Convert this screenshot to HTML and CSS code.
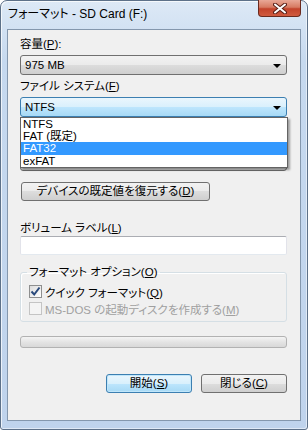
FILE: index.html
```html
<!DOCTYPE html>
<html lang="ja">

<head>
    <meta charset="UTF-8">
    <meta name="viewport" content="width=device-width, initial-scale=1.0">
    <title>フォーマット - SD Card (F:)</title>
    <link rel="stylesheet" href="styles.css">
</head>

<body>
    <div class="window">
        <div class="titlebar">
            <span class="title">フォーマット - SD Card (F:)</span>
            <div class="close-btn">
                <svg width="14" height="11" viewBox="0 0 14 11">
                    <path d="M2 1.5 L12 9.5 M12 1.5 L2 9.5" stroke="#5a2018" stroke-width="4" stroke-linecap="round" />
                    <path d="M2 1.5 L12 9.5 M12 1.5 L2 9.5" stroke="#ffffff" stroke-width="2" stroke-linecap="round" />
                </svg>
            </div>
        </div>

        <div class="client">
            <div class="label first">容量(<u>P</u>):</div>
            <div class="combo"><span>975 MB</span><i class="arrow"></i></div>

            <div class="label">ファイル システム(<u>F</u>)</div>
            <div class="combo-wrap">
                <div class="combo focus"><span>NTFS</span><i class="arrow"></i></div>
                <ul class="dropdown">
                    <li>NTFS</li>
                    <li>FAT (既定)</li>
                    <li class="selected">FAT32</li>
                    <li>exFAT</li>
                </ul>
            </div>

            <!-- allocation size row, hidden under the open list -->
            <div class="label hidden-label"></div>
            <div class="combo"><i class="arrow"></i></div>

            <div class="btn restore">デバイスの既定値を復元する(<u>D</u>)</div>

            <div class="label volume-label">ボリューム ラベル(<u>L</u>)</div>
            <div class="textbox"></div>

            <fieldset class="group">
                <legend>フォーマット オプション(<u>O</u>)</legend>
                <div class="check-row">
                    <span class="checkbox checked">
                        <svg width="11" height="11" viewBox="0 0 11 11">
                            <path d="M1.5 5.5 L4.2 8.5 L9.5 1.5" fill="none" stroke="#2a4a7c" stroke-width="2" />
                        </svg>
                    </span>
                    <span>クイック フォーマット(<u>Q</u>)</span>
                </div>
                <div class="check-row disabled">
                    <span class="checkbox"></span>
                    <span>MS-DOS の起動ディスクを作成する(<u>M</u>)</span>
                </div>
            </fieldset>

            <div class="progress"></div>

            <div class="button-row">
                <div class="btn default">開始(<u>S</u>)</div>
                <div class="btn">閉じる(<u>C</u>)</div>
            </div>
        </div>
    </div>
</body>

</html>
```

FILE: styles.css
```css
body {
    margin: 0;
    padding: 0;
    background-color: #ffffff;
    font-family: "Liberation Sans", "Noto Sans CJK JP", sans-serif;
    font-size: 11.5px;
    font-feature-settings: "palt" 1;
    color: #000;
    overflow: hidden;
}

.window {
    width: 306px;
    height: 428px;
    border: 1px solid #5d7189;
    border-radius: 7px 7px 3px 3px;
    background: linear-gradient(to bottom, #dde9f6, #c6d9ef 60px, #bfd3ec);
    box-shadow: inset 1px 1px 0 rgba(255, 255, 255, 0.7), inset -1px -1px 0 rgba(255, 255, 255, 0.5);
    display: flex;
    flex-direction: column;
}

.titlebar {
    height: 28px;
    display: flex;
    justify-content: space-between;
    align-items: flex-start;
}

.title {
    margin: 6px 0 0 7px;
    line-height: 15px;
    font-size: 12px;
}

.close-btn {
    width: 41px;
    height: 16px;
    margin-right: 6px;
    margin-top: -1px;
    border: 1px solid #6b2a1e;
    border-top: none;
    border-radius: 0 0 4px 4px;
    background: linear-gradient(to bottom, #e9a897, #d77a62 45%, #c3432b 55%, #d05c40);
    display: flex;
    justify-content: center;
    align-items: center;
}

.client {
    margin: 0 6px 0 6px;
    height: 392px;
    border: 1px solid #8497ad;
    background-color: #f0f0f0;
    padding: 7px 13px 0 12px;
    box-sizing: border-box;
}

.label {
    line-height: 14px;
    height: 14px;
    margin-top: 4px;
    white-space: nowrap;
}

.label.first {
    margin-top: 0;
}

.label.hidden-label {
    margin-top: 16px;
}

.combo {
    position: relative;
    height: 20px;
    margin-top: 4px;
    box-sizing: border-box;
    border: 1px solid #707070;
    border-radius: 3px;
    background: linear-gradient(to bottom, #f2f2f2, #ebebeb 50%, #dddddd 50%, #cfcfcf);
    line-height: 18px;
    padding-left: 4px;
}

.combo.focus {
    border-color: #3c7fb1;
    background: linear-gradient(to bottom, #eaf6fd, #d9f0fc 50%, #bee6fd 50%, #a7d9f5);
}

.combo .arrow {
    position: absolute;
    right: 5px;
    top: 8px;
    width: 0;
    height: 0;
    border-left: 4px solid transparent;
    border-right: 4px solid transparent;
    border-top: 4px solid #000;
}

.combo-wrap {
    position: relative;
}

.dropdown {
    position: absolute;
    top: 20px;
    left: 0;
    width: 268px;
    margin: 0;
    padding: 0;
    list-style: none;
    box-sizing: border-box;
    border: 1px solid #646464;
    background-color: #ffffff;
    box-shadow: 2px 2px 2px rgba(0, 0, 0, 0.35);
    z-index: 2;
}

.dropdown li {
    height: 12px;
    line-height: 12px;
    padding-left: 2px;
}

.dropdown li.selected {
    height: 13px;
    line-height: 13px;
    background-color: #3399ff;
    color: #ffffff;
}

.btn {
    height: 19px;
    box-sizing: border-box;
    border: 1px solid #707070;
    border-radius: 3px;
    background: linear-gradient(to bottom, #f2f2f2, #ebebeb 50%, #dddddd 50%, #cfcfcf);
    line-height: 17px;
    text-align: center;
    white-space: nowrap;
}

.btn.restore {
    width: 189px;
    margin: 11px 0 0 1px;
}

.btn.default {
    border-color: #3c7fb1;
    background: linear-gradient(to bottom, #eaf6fd, #d9f0fc 50%, #bee6fd 50%, #a7d9f5);
    box-shadow: inset 0 0 0 1px #c0e6fa;
}

.label.volume-label {
    margin-top: 20px;
}

.textbox {
    height: 19px;
    margin-top: 1px;
    box-sizing: border-box;
    background-color: #ffffff;
    border: 1px solid #e2e3ea;
    border-top-color: #abadb3;
    border-bottom-color: #e3e9ef;
    border-radius: 2px;
}

.group {
    margin: 10px 0 0 0;
    padding: 4px 6px 4px 6px;
    border: 1px solid #d5dfe5;
    border-radius: 3px;
    box-shadow: inset 1px 1px 0 #ffffff;
}

.group legend {
    padding: 0 2px;
    line-height: 14px;
}

.check-row {
    display: flex;
    align-items: center;
    height: 17px;
    margin-left: 2px;
    white-space: nowrap;
}

.check-row.disabled {
    color: #a0a0a0;
}

.checkbox {
    width: 13px;
    height: 13px;
    box-sizing: border-box;
    border: 1px solid #8e8f8f;
    background: linear-gradient(135deg, #dcdcdc, #ffffff);
    margin-right: 3px;
    display: flex;
    align-items: center;
    justify-content: center;
}

.check-row.disabled .checkbox {
    border-color: #c4c4c4;
    background: #f4f4f4;
}

.progress {
    height: 12px;
    margin-top: 14px;
    box-sizing: border-box;
    border: 1px solid #b2b2b2;
    border-radius: 3px;
    background: linear-gradient(to bottom, #f4f4f4, #e4e4e4 50%, #d8d8d8);
}

.button-row {
    display: flex;
    justify-content: flex-end;
    gap: 9px;
    margin-top: 26px;
}

.button-row .btn {
    width: 86px;
}
```
